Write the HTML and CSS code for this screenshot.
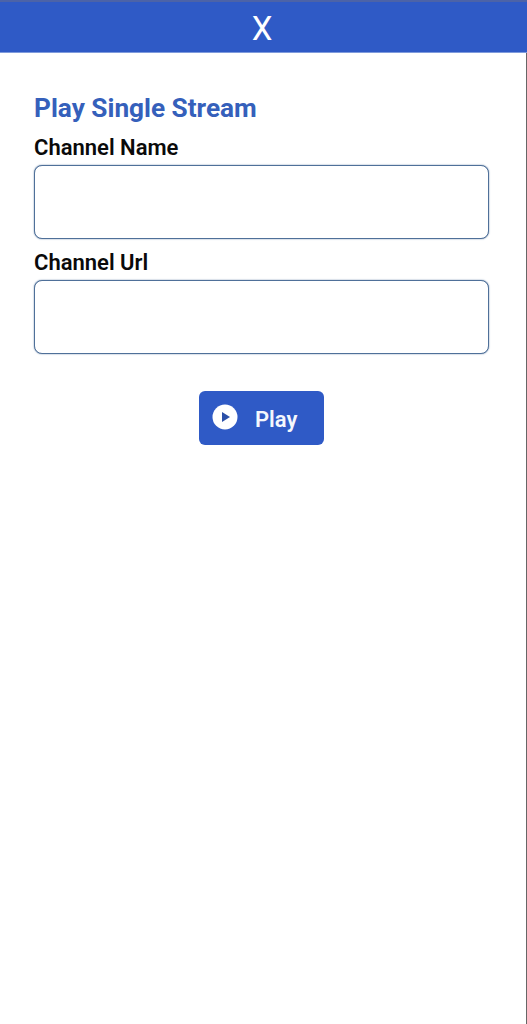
FILE: index.html
```html
<!DOCTYPE html>
<html lang="en">
<head>
  <meta charset="UTF-8">
  <meta name="viewport" content="width=device-width, initial-scale=1.0">
  <title>Play Single Stream</title>
  <link rel="stylesheet" href="styles.css">
</head>
<body>
  <div class="app">
    <header class="top-bar">X</header>

    <form class="stream-form">
      <h1>Play Single Stream</h1>

      <label for="channelName">Channel Name</label>
      <input type="text" id="channelName">

      <label for="channelUrl">Channel Url</label>
      <input type="text" id="channelUrl">

      <button type="button" class="play-btn">
        <svg class="play-icon" viewBox="0 0 26 26" width="26" height="26">
          <circle cx="13" cy="13" r="12.5" fill="#fff"/>
          <path d="M10 8 L18 13 L10 18 Z" fill="#2b50a8"/>
        </svg>
        <span>Play</span>
      </button>
    </form>
  </div>
</body>
</html>
```

FILE: styles.css
```css
/* Reset */
* {
  margin: 0;
  padding: 0;
  box-sizing: border-box;
  font-family: Roboto, sans-serif;
}

html, body {
  height: 100%;
  background: #fff;
  overflow: hidden;
}

.app {
  height: 1024px;
  background: #fff;
  border-right: 1px solid #666;
}

.top-bar {
  height: 53px;
  padding-right: 3px;
  background: #2f5ac6;
  border-top: 2px solid #4c63a8;
  border-bottom: 1px solid #7f9bdc;
  margin-right: -1px;
  color: #fff;
  font-size: 33px;
  font-weight: 400;
  line-height: 54px;
  text-align: center;
}

.stream-form {
  display: flex;
  flex-direction: column;
  padding: 38px 37px 0 34px;
}

h1 {
  color: #3560bb;
  font-size: 26.2px;
  font-weight: 700;
  line-height: 34px;
  margin-bottom: 9px;
}

label {
  color: #0a0a0a;
  font-size: 22px;
  font-weight: 600;
  line-height: 28px;
  margin-bottom: 3px;
}

input[type="text"] {
  height: 74px;
  border: 1px solid #4f7099;
  border-radius: 8px;
  box-shadow: 0 0 1.5px #4f7099;
  background: #fff;
  margin-bottom: 10px;
}

.play-btn {
  display: flex;
  align-items: center;
  align-self: center;
  gap: 17px;
  width: 125px;
  height: 54px;
  margin-top: 27px;
  padding-left: 13px;
  background: #2f5ac6;
  color: #f4f7fd;
  font-size: 22px;
  font-weight: 600;
  border: none;
  border-radius: 6px;
  cursor: pointer;
}

.play-btn span {
  margin-top: 2px;
}

.play-icon {
  flex: none;
  margin-top: -2px;
}
```
